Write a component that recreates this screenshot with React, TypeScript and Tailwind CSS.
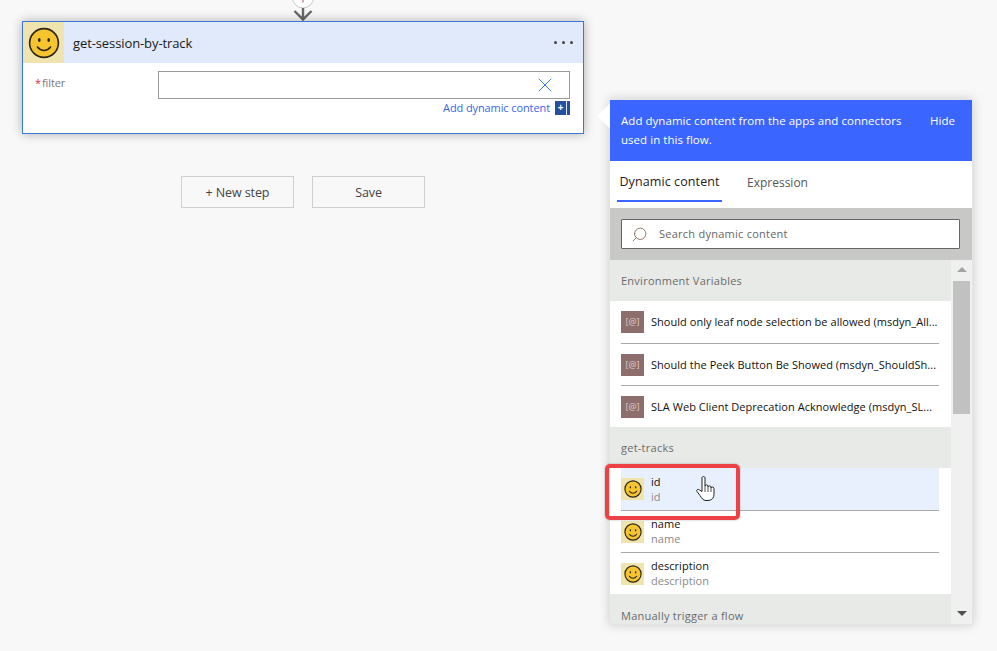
import { Search, X } from 'lucide-react';

const FONT = "font-['Open_Sans','Noto_Sans',sans-serif]";

function Smiley({ size, stroke = 1.6 }: { size: number; stroke?: number }) {
  return (
    <svg width={size} height={size} viewBox="0 0 32 32">
      <circle cx="16" cy="16" r="14.4" fill="#f6c42e" stroke="#2a2416" strokeWidth={stroke} />
      <ellipse cx="11.300" cy="13" rx="1.300" ry="1.900" fill="#2a2416" />
      <ellipse cx="20.700" cy="13" rx="1.300" ry="1.900" fill="#2a2416" />
      <path d="M9.500 20c2 2.600 4 3.500 6.500 3.500s4.500-.9 6.500-3.500" fill="none" stroke="#2a2416" strokeWidth={stroke} strokeLinecap="round" />
    </svg>
  );
}

function EnvRow({ label, height, last, nudge }: { label: string; height: string; last?: boolean; nudge?: boolean }) {
  return (
    <div className={`ml-[11px] mr-[12px] ${height}`}>
      <div className={`w-full h-full flex items-center ${last ? '' : 'border-b border-[#aaaaaa]'}`}>
        <div className="w-[23px] h-[22px] bg-[#8e6d6d] flex items-center justify-center text-[9px] text-[#dccfcf] shrink-0">[@]</div>
        <div className={`ml-[7px] text-[11px] text-[#111] whitespace-nowrap tracking-[0.04px] ${nudge ? 'pt-[2px]' : ''}`}>{label}</div>
      </div>
    </div>
  );
}

function OutputRow({ label, height, active, last }: { label: string; height: string; active?: boolean; last?: boolean }) {
  return (
    <div className={`ml-[11px] mr-[12px] ${height}`}>
      <div className={`h-full flex items-center ${active ? 'bg-[#e9f0fd]' : ''} ${last ? '' : 'border-b border-[#aaaaaa]'}`}>
        <div className="w-[23px] h-[22px] bg-[#efe4ad] flex items-center justify-center shrink-0">
          <Smiley size={18} stroke={2} />
        </div>
        <div className={`ml-[7px] flex flex-col ${active ? '' : 'pb-[2px]'}`}>
          <span className="text-[11px] leading-[15px] text-[#111] tracking-[0.04px]">{label}</span>
          <span className="text-[11px] leading-[15px] text-[#8a8a8a] tracking-[0.04px]">{label}</span>
        </div>
      </div>
    </div>
  );
}

function SectionHeader({ label, height }: { label: string; height: string }) {
  return (
    <div className={`${height} bg-[#e8eae8] pl-[11px] pt-[2px] flex items-center text-[11px] text-[#6b6b6b] tracking-[0.25px]`}>{label}</div>
  );
}

export default function App() {
  return (
    <div className={`${FONT} relative h-[651px] w-[997px] overflow-hidden bg-[#f8f8f8] flex`}>
      {/* flow canvas */}
      <div className="w-[609px] shrink-0 pl-[22px] flex flex-col">
        <div className="w-[562px] h-[21px] flex justify-center">
          <svg width="34" height="21" viewBox="0 0 34 21">
            <circle cx="17" cy="-2.500" r="10.500" fill="#fff" stroke="#c8c8c8" />
            <path d="M17 0v2.500" stroke="#d9a3c0" strokeWidth="2" />
            <path d="M17 8v11M8.500 11l8.500 8.500 8.500-8.500" fill="none" stroke="#666" strokeWidth="2.400" />
          </svg>
        </div>
        <div className="w-[562px] h-[113px] bg-white border border-[#3a78d8] shadow-[0_0_10px_rgba(0,0,0,0.3)]">
          <div className="h-[41px] bg-[#e1eafa] flex items-center">
            <div className="w-[41px] h-[41px] bg-[#efe4ad] flex items-center justify-center">
              <Smiley size={32} />
            </div>
            <div className="ml-[9px] pt-[2px] text-[13px] text-[#1a1a1a] tracking-[-0.1px]">get-session-by-track</div>
            <div className="ml-auto mr-[10px] flex gap-[5px]">
              <span className="w-[3px] h-[3px] rounded-full bg-[#444]" />
              <span className="w-[3px] h-[3px] rounded-full bg-[#444]" />
              <span className="w-[3px] h-[3px] rounded-full bg-[#444]" />
            </div>
          </div>
          <div className="flex pt-[8px] pl-[12px] pr-[13px]">
            <div className="w-[123px] text-[11px] text-[#7a7a7a] leading-[24px] tracking-[-0.1px]">
              <span className="text-[#d13438] mr-[1px]">*</span>filter
            </div>
            <div className="flex-1">
              <div className="h-[28px] border border-[#999] flex items-center justify-end pr-[12px]">
                <X size={24} strokeWidth={1} className="text-[#3a78f0]" />
              </div>
              <div className="mt-[1px] flex items-center justify-end">
                <span className="text-[11px] text-[#3a66e8] tracking-[-0.1px]">Add dynamic content</span>
                <span className="ml-[5px] w-[15px] h-[14px] bg-[#24509f] flex">
                  <span className="w-[11px] text-center text-[10px] leading-[13px] font-bold text-white">+</span>
                  <span className="w-[1px] bg-[#e1eafa]" />
                </span>
              </div>
            </div>
          </div>
        </div>
        <div className="w-[562px] mt-[42px] flex justify-center gap-[18px]">
          <button className="w-[113px] h-[32px] pt-[2px] border border-[#cfcfcf] text-[12.5px] text-[#444] tracking-[-0.1px]">+ New step</button>
          <button className="w-[113px] h-[32px] pt-[2px] border border-[#cfcfcf] text-[12.5px] text-[#444] tracking-[-0.1px]">Save</button>
        </div>
      </div>

      {/* dynamic content panel */}
      <div className="relative mt-[99px] w-[364px] h-[526px] bg-white border border-[#e4e4e4] shadow-[0_0_10px_rgba(0,0,0,0.18)] flex flex-col">
        <div className="absolute left-[-9px] top-[7px] w-[18px] h-[18px] rotate-45 bg-white" />
        <div className="relative h-[61px] bg-[#3a65ff] flex text-white text-[11.5px] leading-[19px] pl-[11px] pt-[11px]">
          <div className="w-[301px] tracking-[0.04px]">Add dynamic content from the apps and connectors used in this flow.</div>
          <div className="ml-[8px]">Hide</div>
        </div>
        <div className="h-[47px] flex pl-[7px]">
          <div className="w-[105px] h-[41px] pt-[4px] border-b-2 border-[#3a65ff] flex items-center justify-center text-[12.5px] text-[#222] tracking-[0.1px]">Dynamic content</div>
          <div className="ml-[25px] h-[41px] pt-[2px] flex items-center text-[12px] text-[#555]">Expression</div>
        </div>
        <div className="h-[52px] bg-[#c8c9c6] pl-[11px] pr-[12px] flex items-center">
          <div className="w-full h-[30px] bg-white border border-[#666] rounded-[1px] flex items-center pl-[9px] text-[11px] text-[#666] tracking-[0.25px]">
            <Search size={17} strokeWidth={1.1} className="text-[#7a5a44] -scale-x-100" />
            <span className="ml-[11px]">Search dynamic content</span>
          </div>
        </div>
        <div className="flex-1 flex min-h-0">
          <div className="w-[341px] overflow-hidden">
            <SectionHeader label="Environment Variables" height="h-[41px]" />
            <EnvRow label="Should only leaf node selection be allowed (msdyn_All..." height="h-[43px]" />
            <EnvRow label="Should the Peek Button Be Showed (msdyn_ShouldSh..." height="h-[42px]" nudge />
            <EnvRow label="SLA Web Client Deprecation Acknowledge (msdyn_SL..." height="h-[41px]" last nudge />
            <SectionHeader label="get-tracks" height="h-[41px]" />
            <OutputRow label="id" height="h-[43px]" active />
            <OutputRow label="name" height="h-[42px]" />
            <OutputRow label="description" height="h-[41px]" last />
            <SectionHeader label="Manually trigger a flow" height="h-[42px]" />
          </div>
          <div className="flex-1 bg-[#f0f0f0] flex flex-col items-center pt-[7px] pb-[8px]">
            <div className="w-0 h-0 border-x-[5px] border-x-transparent border-b-[5px] border-b-[#a3a3a3]" />
            <div className="mt-[9px] w-[17px] h-[133px] bg-[#c1c1c1]" />
            <div className="mt-auto w-0 h-0 border-x-[5px] border-x-transparent border-t-[5px] border-t-[#505050]" />
          </div>
        </div>
      </div>

      {/* annotation and pointer on top of the screenshot */}
      <div className="absolute left-[605px] top-[464px] w-[135px] h-[56px] border-[4px] border-[#ee4146] rounded-[5px] shadow-[0_0_2px_rgba(0,0,0,0.35)]" />
      <svg className="absolute left-[696px] top-[476px]" width="20" height="26" viewBox="0 0 20 26">
        <path d="M6 2c0-2 3-2 3 0v8c0-1.500 3-1.500 3 0v1c0-1.500 3-1.500 3 0v1c0-1.500 3-1.200 3 .5v6c0 3-2 6-6 6h-2c-3 0-4-2-6-5l-3-4c-1-1.500 1-3 2.500-1.500L6 15.500z" fill="#fff" stroke="#222" strokeWidth="1" strokeLinejoin="round" />
        <path d="M9 10v6M12 11v5M15 12v4" stroke="#222" strokeWidth="0.8" />
      </svg>
    </div>
  );
}
